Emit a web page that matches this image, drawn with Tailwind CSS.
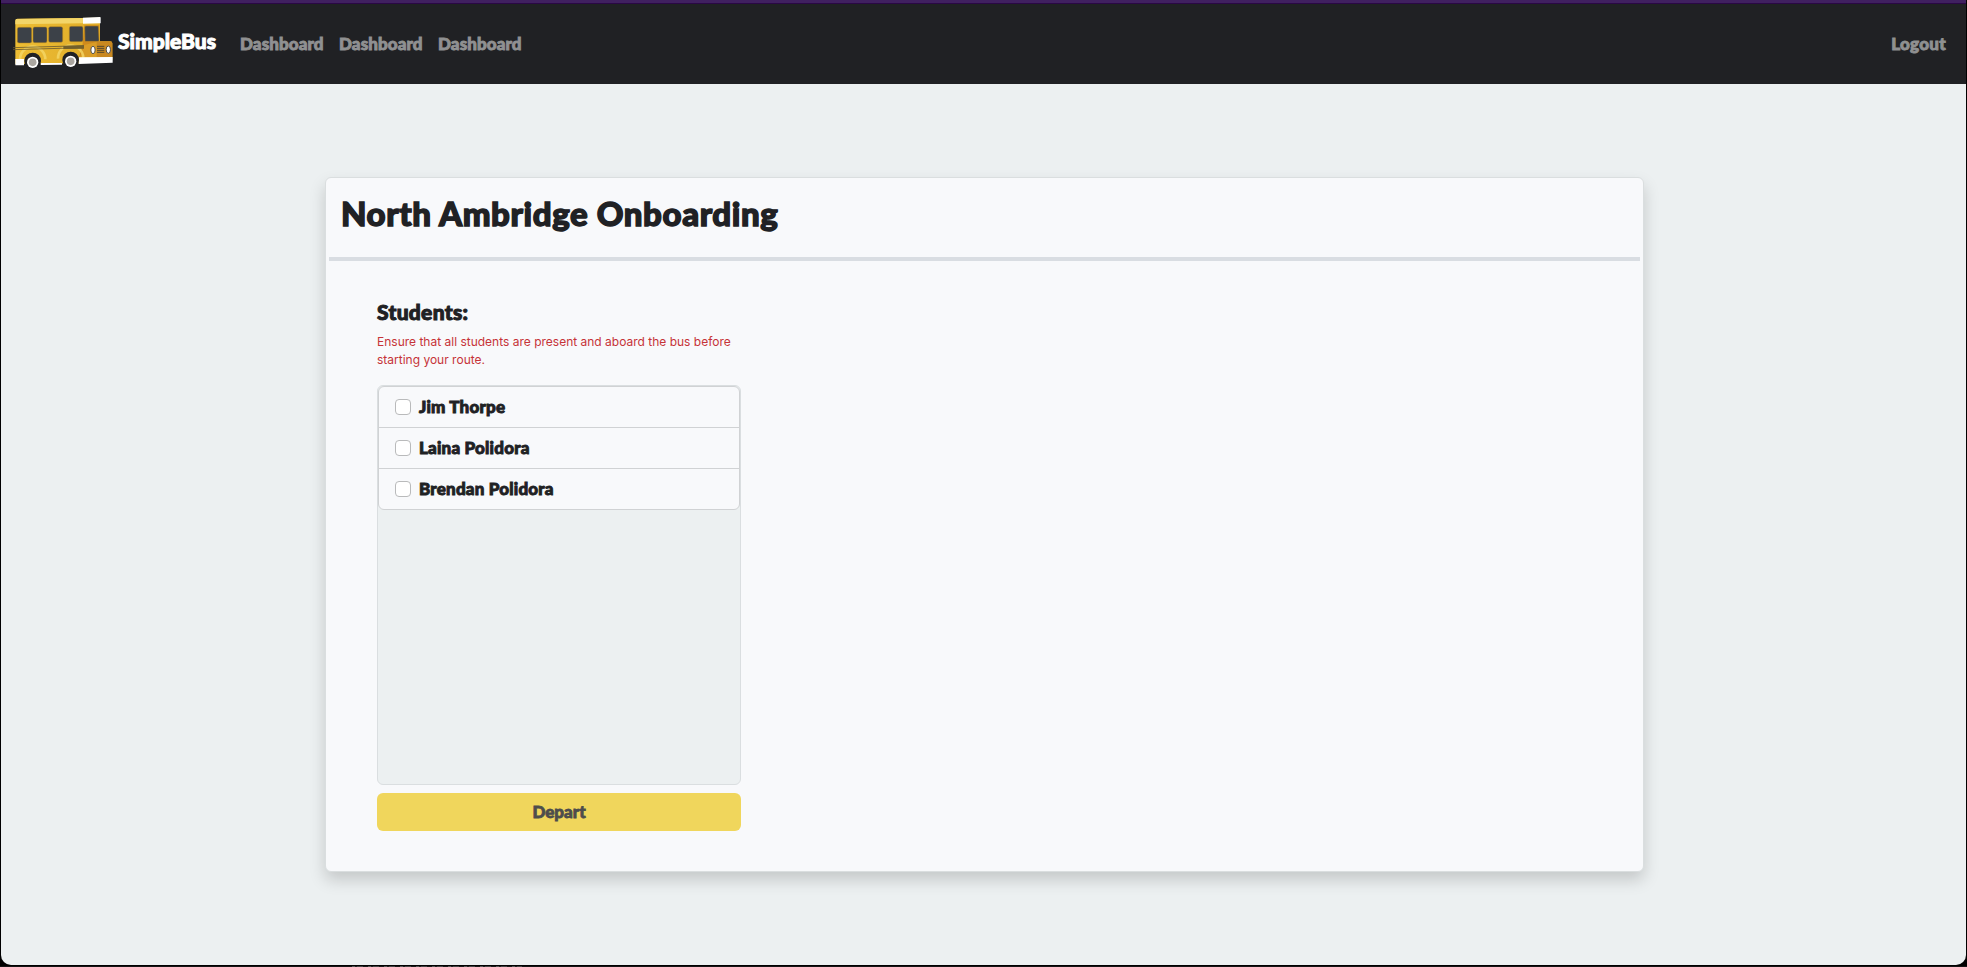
<!DOCTYPE html>
<html lang="en">
<head>
<meta charset="utf-8">
<title>SimpleBus</title>
<script src="https://cdn.jsdelivr.net/npm/@tailwindcss/browser@4"></script>
</head>
<body class="h-[967px] w-[1967px] overflow-hidden bg-black font-['Lato',sans-serif] font-black text-[#202124]">
<div class="mx-px flex h-[965px] flex-col overflow-hidden rounded-b-[10px] bg-[#ecf0f1]">
  <div class="h-1 shrink-0 border-b border-[#2a0845] bg-[#402060]"></div>
  <nav class="flex h-20 shrink-0 items-center bg-[#202124] pl-[11px] pr-5 text-[17px] leading-10 text-[#8f9091] [-webkit-text-stroke:0.9px_#8f9091]">
    <svg class="mb-1 h-[55px] w-[102px] shrink-0" viewBox="36 45 306 165">
      <defs>
        <linearGradient id="side" x1="0" y1="0" x2="1" y2="0"><stop offset="0" stop-color="#edbd34"/><stop offset="1" stop-color="#dda927"/></linearGradient>
      </defs>
      <path d="M46 62q0-6 6-6L300 53V124H330q7 0 7 7V180L236 190L46 192z" fill="url(#side)"/>
      <path d="M48 57L250 54V70L46 73V62z" fill="#f3d569"/>
      <path d="M249 53L300 51q2 0 2 2V70L249 71z" fill="#fff"/>
      <path d="M253 76H297V124H288V170H237L247 140z" fill="#cf8a1c"/>
      <path d="M289 124H331q6 0 6 6V172H289z" fill="#c98820"/>
      <path d="M253 135L289 126V171H240z" fill="#d99c26"/>
      <g fill="#3c4148" stroke="#b8871f" stroke-width="1.5">
        <rect x="52" y="82" width="43" height="47" rx="5"/>
        <rect x="99" y="81" width="42" height="47" rx="5"/>
        <rect x="146" y="80" width="42" height="47" rx="5"/>
        <rect x="208" y="79" width="41" height="46" rx="5"/>
        <path d="M258 78H292q3 0 3 3L297 121q0 3-3 3H257q-3 0-2-4L254 82q0-4 4-4z"/>
      </g>
      <path d="M60 178A38 38 0 0 1 136 178M174 176A38 38 0 0 1 250 173" fill="none" stroke="#f4d768" stroke-width="8" stroke-opacity=".8"/>
      <path d="M39 143L252 137M39 149L252 143" stroke="#6d5b2c" stroke-width="2.5"/>
      <path d="M190 138L252 136V146L190 147z" fill="#73602b"/>
      <path d="M46 177H72V196H48q-2 0-2-2zM122 189H186V194L122 195zM236 172L338 171V188L236 192z" fill="#fff"/>
      <circle cx="98" cy="183" r="25" fill="#202124"/>
      <circle cx="212" cy="180" r="25" fill="#202124"/>
      <circle cx="98" cy="187" r="17" fill="#fff"/>
      <circle cx="212" cy="184" r="17" fill="#fff"/>
      <circle cx="98" cy="187" r="11.5" fill="#aaa6a0"/>
      <circle cx="212" cy="184" r="11.5" fill="#aaa6a0"/>
      <path d="M291 139H313M291 145H313M291 151H313M291 157H313" stroke="#55492e" stroke-width="3"/>
      <ellipse cx="279" cy="150" rx="6.5" ry="11" fill="#fff" stroke="#4d4a45" stroke-width="3"/>
      <ellipse cx="325" cy="149" rx="6.5" ry="11" fill="#fff" stroke="#4d4a45" stroke-width="3"/>
    </svg>
    <div class="ml-1 w-[121px] pb-1.5 text-[21px] leading-8 text-white [-webkit-text-stroke:1px_#fff]">SimpleBus</div>
    <div class="flex grow gap-4 pl-px tracking-[0.1px]">
      <a class="w-[83px]">Dashboard</a>
      <a class="w-[83px]">Dashboard</a>
      <a class="w-[83px]">Dashboard</a>
    </div>
    <a class="tracking-[0.3px]">Logout</a>
  </nav>
  <main class="flex pl-[324px] pt-[93px]">
    <section class="h-[695px] w-[1319px] rounded-md border border-[#dadedf] bg-[#f8f9fb] shadow-[0_8px_16px_rgba(0,0,0,0.17)]">
      <h1 class="mx-[3px] h-[83px] border-b-4 border-[#d9dde2] pl-3 pt-[15px] text-[33px] leading-10 tracking-[0.59px] [-webkit-text-stroke:1.4px_#202124]">North Ambridge Onboarding</h1>
      <div class="ml-[51px] mt-[38px] w-[364px]">
        <h2 class="text-[21px] leading-[26px] tracking-[0.3px] [-webkit-text-stroke:1px_#202124]">Students:</h2>
        <p class="mt-2 font-['Inter',sans-serif] text-xs font-normal leading-[18px] text-[#c63338]">Ensure that all students are present and aboard the bus before<br>starting your route.</p>
        <div class="mt-4 h-[400px] rounded-md border border-[#dadee0] bg-[#ecf0f1]">
          <ul class="divide-y divide-[#d0d2d4] rounded-md border border-[#d0d2d4] bg-[#f8f9fb] text-[17px] leading-10 tracking-[0.2px] [-webkit-text-stroke:0.9px_#202124]">
            <li class="flex h-[41px] items-center pl-4"><span class="mr-2 size-4 rounded border border-[#b9babb] bg-white"></span>Jim Thorpe</li>
            <li class="flex h-[41px] items-center pl-4"><span class="mr-2 size-4 rounded border border-[#b9babb] bg-white"></span>Laina Polidora</li>
            <li class="flex h-10 items-center pl-4"><span class="mr-2 size-4 rounded border border-[#b9babb] bg-white"></span>Brendan Polidora</li>
          </ul>
        </div>
        <button class="mt-2 block h-[38px] w-full rounded-md bg-[#f0d65c] text-[17px] text-[#4d4d4c] [-webkit-text-stroke:0.8px_#4d4d4c]">Depart</button>
      </div>
    </section>
  </main>
</div>
<div class="mt-px h-px bg-[#151515] pl-[352px]"><div class="h-px w-[170px] bg-[repeating-linear-gradient(90deg,#555_0_3px,#222_3px_5px,#444_5px_11px,#1a1a1a_11px_16px)]"></div></div>
</body>
</html>
